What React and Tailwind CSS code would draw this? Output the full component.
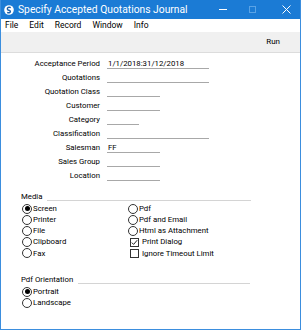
import React from 'react';

const fields = [
  { label: 'Acceptance Period', w: 'w-[102px]', value: '1/1/2018:31/12/2018' },
  { label: 'Quotations', w: 'w-[102px]' },
  { label: 'Quotation Class', w: 'w-[53px]' },
  { label: 'Customer', w: 'w-[53px]' },
  { label: 'Category', w: 'w-[32px]' },
  { label: 'Classification', w: 'w-[102px]' },
  { label: 'Salesman', w: 'w-[53px]', value: 'FF' },
  { label: 'Sales Group', w: 'w-[53px]' },
  { label: 'Location', w: 'w-[53px]' },
];

const Radio = ({ label, checked }) => (
  <div className="flex items-center h-[11.2px]">
    <span className="w-[10px] h-[10px] rounded-full border border-[#333] bg-white flex items-center justify-center">
      {checked && <span className="w-[5px] h-[5px] rounded-full bg-black" />}
    </span>
    <span className="ml-[1px]">{label}</span>
  </div>
);

const Check = ({ label, checked }) => (
  <div className="flex items-center h-[11.2px] pl-[2px]">
    <span className="w-[9px] h-[9px] border border-[#333] bg-white flex items-center justify-center">
      {checked && (
        <svg width="7" height="7" viewBox="0 0 7 7">
          <path d="M0.8 3.6 L2.6 5.4 L6.2 1.2" fill="none" stroke="#222" strokeWidth="1" />
        </svg>
      )}
    </span>
    <span className="ml-[3px]">{label}</span>
  </div>
);

const Section = ({ title, pr }) => (
  <div className={`flex items-center h-[10px] pl-[20px] ${pr}`}>
    <span>{title}</span>
    <span className="flex-1 h-[1px] bg-[#d4d4d4] ml-[5px] self-end mb-[1px]" />
  </div>
);

export default function App() {
  return (
    <div className="w-[301px] h-[330px] flex flex-col bg-white border border-[#3b8ede] border-t-0 overflow-hidden text-black" style={{ fontFamily: 'Roboto, "Liberation Sans", sans-serif' }}>
      <div className="h-[19px] bg-[#1b7bd5] flex items-center text-white shrink-0">
        <svg width="10" height="10" viewBox="0 0 10 10" className="ml-[3px]">
          <circle cx="5" cy="5" r="4.8" fill="#fff" />
          <path d="M6.8 2.6 C5 1.6 3 2.6 3.4 4.2 C3.8 5.6 6.4 5 6.4 6.6 C6.4 7.8 4.6 8.2 3.2 7.4" fill="none" stroke="#1b5fa8" strokeWidth="1.4" />
        </svg>
        <span className="ml-[4px] text-[10.3px]">Specify Accepted Quotations Journal</span>
        <div className="flex-1" />
        <span className="w-[8px] h-[1px] bg-white mr-[22px]" />
        <span className="w-[7px] h-[7px] border border-[#5aa3e6] mr-[26px]" />
        <svg width="9" height="9" viewBox="0 0 9 9" className="mr-[9px]">
          <path d="M0.5 0.5 L8.5 8.5 M8.5 0.5 L0.5 8.5" stroke="#fff" strokeWidth="1" />
        </svg>
      </div>
      <div className="h-[13px] flex items-center text-[8.5px] pl-[4px] gap-[11px] shrink-0">
        <span>File</span>
        <span>Edit</span>
        <span>Record</span>
        <span>Window</span>
        <span>Info</span>
      </div>
      <div className="h-[21px] bg-[#f0f0f0] border-b border-[#dcdcdc] flex items-center justify-end pr-[20px] text-[8px] shrink-0">
        <span>Run</span>
      </div>
      <div className="flex flex-col pt-[4px] text-[7.8px]">
        {fields.map((f) => (
          <div key={f.label} className="flex items-center h-[14px]">
            <span className="w-[99px] text-right">{f.label}</span>
            <div className={`${f.w} ml-[7px] h-[10px] border-b border-[#a8a8a8] leading-[10px] pl-[1px]`}>
              {f.value}
            </div>
          </div>
        ))}
        <div className="mt-[9px]">
          <Section title="Media" pr="pr-[49px]" />
        </div>
        <div className="grid grid-cols-[106px_1fr] pl-[21px] mt-[1px]">
          <div className="flex flex-col">
            <Radio label="Screen" checked />
            <Radio label="Printer" />
            <Radio label="File" />
            <Radio label="Clipboard" />
            <Radio label="Fax" />
          </div>
          <div className="flex flex-col">
            <Radio label="Pdf" />
            <Radio label="Pdf and Email" />
            <Radio label="Html as Attachment" />
            <Check label="Print Dialog" checked />
            <Check label="Ignore Timeout Limit" />
          </div>
        </div>
        <div className="mt-[16px]">
          <Section title="Pdf Orientation" pr="pr-[50px]" />
        </div>
        <div className="flex flex-col pl-[21px] mt-[1px]">
          <Radio label="Portrait" checked />
          <Radio label="Landscape" />
        </div>
      </div>
    </div>
  );
}
